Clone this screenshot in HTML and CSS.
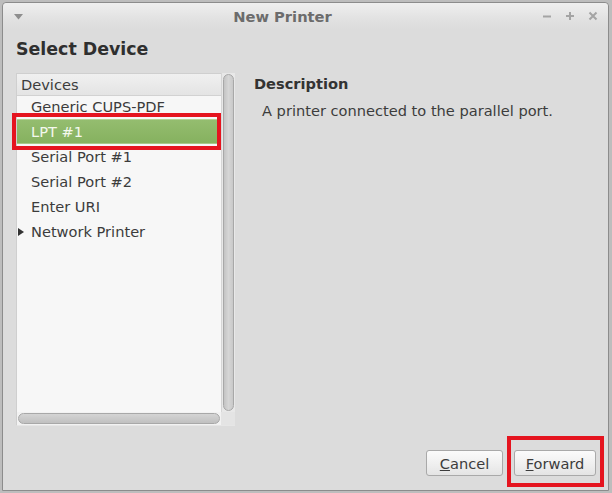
FILE: index.html
```html
<!DOCTYPE html>
<html>
<head>
<meta charset="utf-8">
<link rel="stylesheet" href="styles.css">
</head>
<body>
<div class="window">
  <div class="titlebar">
    <span class="menu-arrow">
      <svg width="9" height="6" viewBox="0 0 9 6"><path d="M0 0 L9 0 L4.5 5.5 Z" fill="#8e8e8e"/></svg>
    </span>
    <span class="title">New Printer</span>
    <span class="controls">
      <svg width="10" height="10" viewBox="0 0 10 10"><path d="M1 5.5 H9" stroke="#a4a4a4" stroke-width="2"/></svg>
      <svg width="10" height="10" viewBox="0 0 10 10"><path d="M1 5 H9 M5 1 V9" stroke="#a4a4a4" stroke-width="2"/></svg>
      <svg width="10" height="10" viewBox="0 0 10 10"><path d="M1.5 1.5 L8.5 8.5 M8.5 1.5 L1.5 8.5" stroke="#a4a4a4" stroke-width="2"/></svg>
    </span>
  </div>
  <div class="content">
    <h1 class="heading">Select Device</h1>
    <div class="main">
      <div class="listbox">
        <div class="list-area">
          <div class="list">
            <div class="list-header">Devices</div>
            <div class="row">Generic CUPS-PDF</div>
            <div class="row selected">LPT #1</div>
            <div class="row">Serial Port #1</div>
            <div class="row">Serial Port #2</div>
            <div class="row">Enter URI</div>
            <div class="row expander"><span class="tri">
              <svg width="6" height="8" viewBox="0 0 6 8"><path d="M0 0 L6 4 L0 8 Z" fill="#333"/></svg>
            </span>Network Printer</div>
          </div>
          <div class="vscroll"><div class="vthumb"></div></div>
        </div>
        <div class="hscroll-row">
          <div class="hscroll"><div class="hthumb"></div></div>
          <div class="corner"></div>
        </div>
        <div class="annot annot-row"></div>
      </div>
      <div class="desc">
        <div class="desc-title">Description</div>
        <div class="desc-text">A printer connected to the parallel port.</div>
      </div>
    </div>
    <div class="buttons">
      <button class="btn"><u>C</u>ancel</button>
      <div class="fwd-wrap">
        <button class="btn"><u>F</u>orward</button>
        <div class="annot annot-btn"></div>
      </div>
    </div>
  </div>
</div>
</body>
</html>
```
FILE: styles.css
```css
html, body {
  margin: 0;
  padding: 0;
}
body {
  background: #bdbdbd;
  width: 612px;
  height: 493px;
  overflow: hidden;
  font-family: "DejaVu Sans", sans-serif;
  font-size: 14.6px;
  color: #3c3c3c;
}
.window {
  margin: 2px 3px 0 2px;
  height: 487px;
  border: 1px solid #8c8c8c;
  border-radius: 4px 4px 0 0;
  background: #dcdcdc;
  display: flex;
  flex-direction: column;
  box-sizing: content-box;
}
.titlebar {
  height: 26px;
  display: flex;
  align-items: center;
  background: linear-gradient(#efefef, #e2e2e2 60%, #dcdcdc);
  border-radius: 4px 4px 0 0;
  position: relative;
}
.menu-arrow {
  width: 9px;
  margin-left: 11px;
  display: flex;
  align-items: center;
  margin-top: 1px;
}
.title {
  flex: 1;
  text-align: center;
  font-weight: bold;
  font-size: 14.7px;
  color: #6c6c6c;
  padding-top: 1px;
}
.controls {
  display: flex;
  gap: 13px;
  margin-right: 10px;
  align-items: center;
}
.content {
  flex: 1;
  display: flex;
  flex-direction: column;
  padding: 0 12px 14px 13px;
}
.heading {
  margin: 8px 0 0 0;
  font-size: 17.4px;
  line-height: 24px;
  font-weight: bold;
  color: #2f2f2f;
}
.main {
  display: flex;
  margin-top: 12px;
}
.listbox {
  width: 219px;
  display: flex;
  flex-direction: column;
  position: relative;
}
.list-area {
  display: flex;
  height: 339px;
}
.list {
  flex: 1;
  background: #f7f7f7;
  border: 1px solid #cfcfcf;
  border-right: none;
  border-bottom: none;
}
.list-header {
  height: 21px;
  line-height: 21px;
  padding-left: 4px;
  background: linear-gradient(#f0f0f0, #e4e4e4);
  border-bottom: 1px solid #d2d2d2;
  color: #3c3c3c;
}
.row {
  height: 25px;
  line-height: 25px;
  padding-left: 14px;
  color: #3c3c3c;
}
.row:nth-child(2) {
  height: 23px;
  line-height: 22px;
}
.row.selected {
  background: linear-gradient(#94bd6f, #86b15f);
  color: #f4f8ee;
  border-top: 1px solid #b5d398;
  border-bottom: 1px solid #a8c98a;
  height: 23px;
  line-height: 23px;
}
.row.expander {
  padding-left: 1px;
  display: flex;
  align-items: center;
}
.tri {
  width: 13px;
  display: flex;
  align-items: center;
}
.vscroll {
  width: 14px;
  background: #e8e8e8;
  border-left: 1px solid #d6d6d6;
  padding: 1px 1px 0 1px;
  display: flex;
  box-sizing: border-box;
}
.vthumb {
  flex: 1;
  border-radius: 6px;
  border: 1px solid #a8a8a8;
  background: linear-gradient(90deg, #c4c4c4, #d6d6d6 50%, #c8c8c8);
  margin-bottom: 1px;
}
.hscroll-row {
  display: flex;
  height: 14px;
}
.hscroll {
  flex: 1;
  background: #f2f2f2;
  border-left: 1px solid #cfcfcf;
  border-bottom: 1px solid #e6e6e6;
  padding: 1px;
  display: flex;
}
.hthumb {
  flex: 1;
  border-radius: 6px;
  border: 1px solid #a8a8a8;
  background: linear-gradient(#d4d4d4, #c8c8c8 60%, #c0c0c0);
}
.corner {
  width: 14px;
  background: #e4e4e4;
  border-bottom: 1px solid #e6e6e6;
}
.desc {
  flex: 1;
  padding-left: 19px;
}
.desc-title {
  font-weight: bold;
  color: #333;
  margin-top: 1px;
  line-height: 20px;
}
.desc-text {
  margin-top: 7px;
  padding-left: 8px;
  line-height: 20px;
  color: #3c3c3c;
}
.buttons {
  margin-top: auto;
  display: flex;
  justify-content: flex-end;
  gap: 11px;
}
.btn {
  font-family: "DejaVu Sans", sans-serif;
  font-size: 14.6px;
  color: #3c3c3c;
  height: 26px;
  padding: 0 8px;
  border: 1px solid #a9a9a9;
  border-radius: 3px;
  background: linear-gradient(#fbfbfb, #eeeeee 60%, #e4e4e4);
}
.btn:first-child { width: 77px; }
.fwd-wrap { position: relative; display: flex; }
.fwd-wrap .btn { width: 82px; }
.annot {
  position: absolute;
  border: 4px solid #e5141f;
  box-sizing: border-box;
  pointer-events: none;
}
.annot-row {
  left: -4px;
  top: 40px;
  width: 209px;
  height: 37px;
}
.annot-btn {
  left: -7px;
  top: -14px;
  width: 97px;
  height: 51px;
}
```
